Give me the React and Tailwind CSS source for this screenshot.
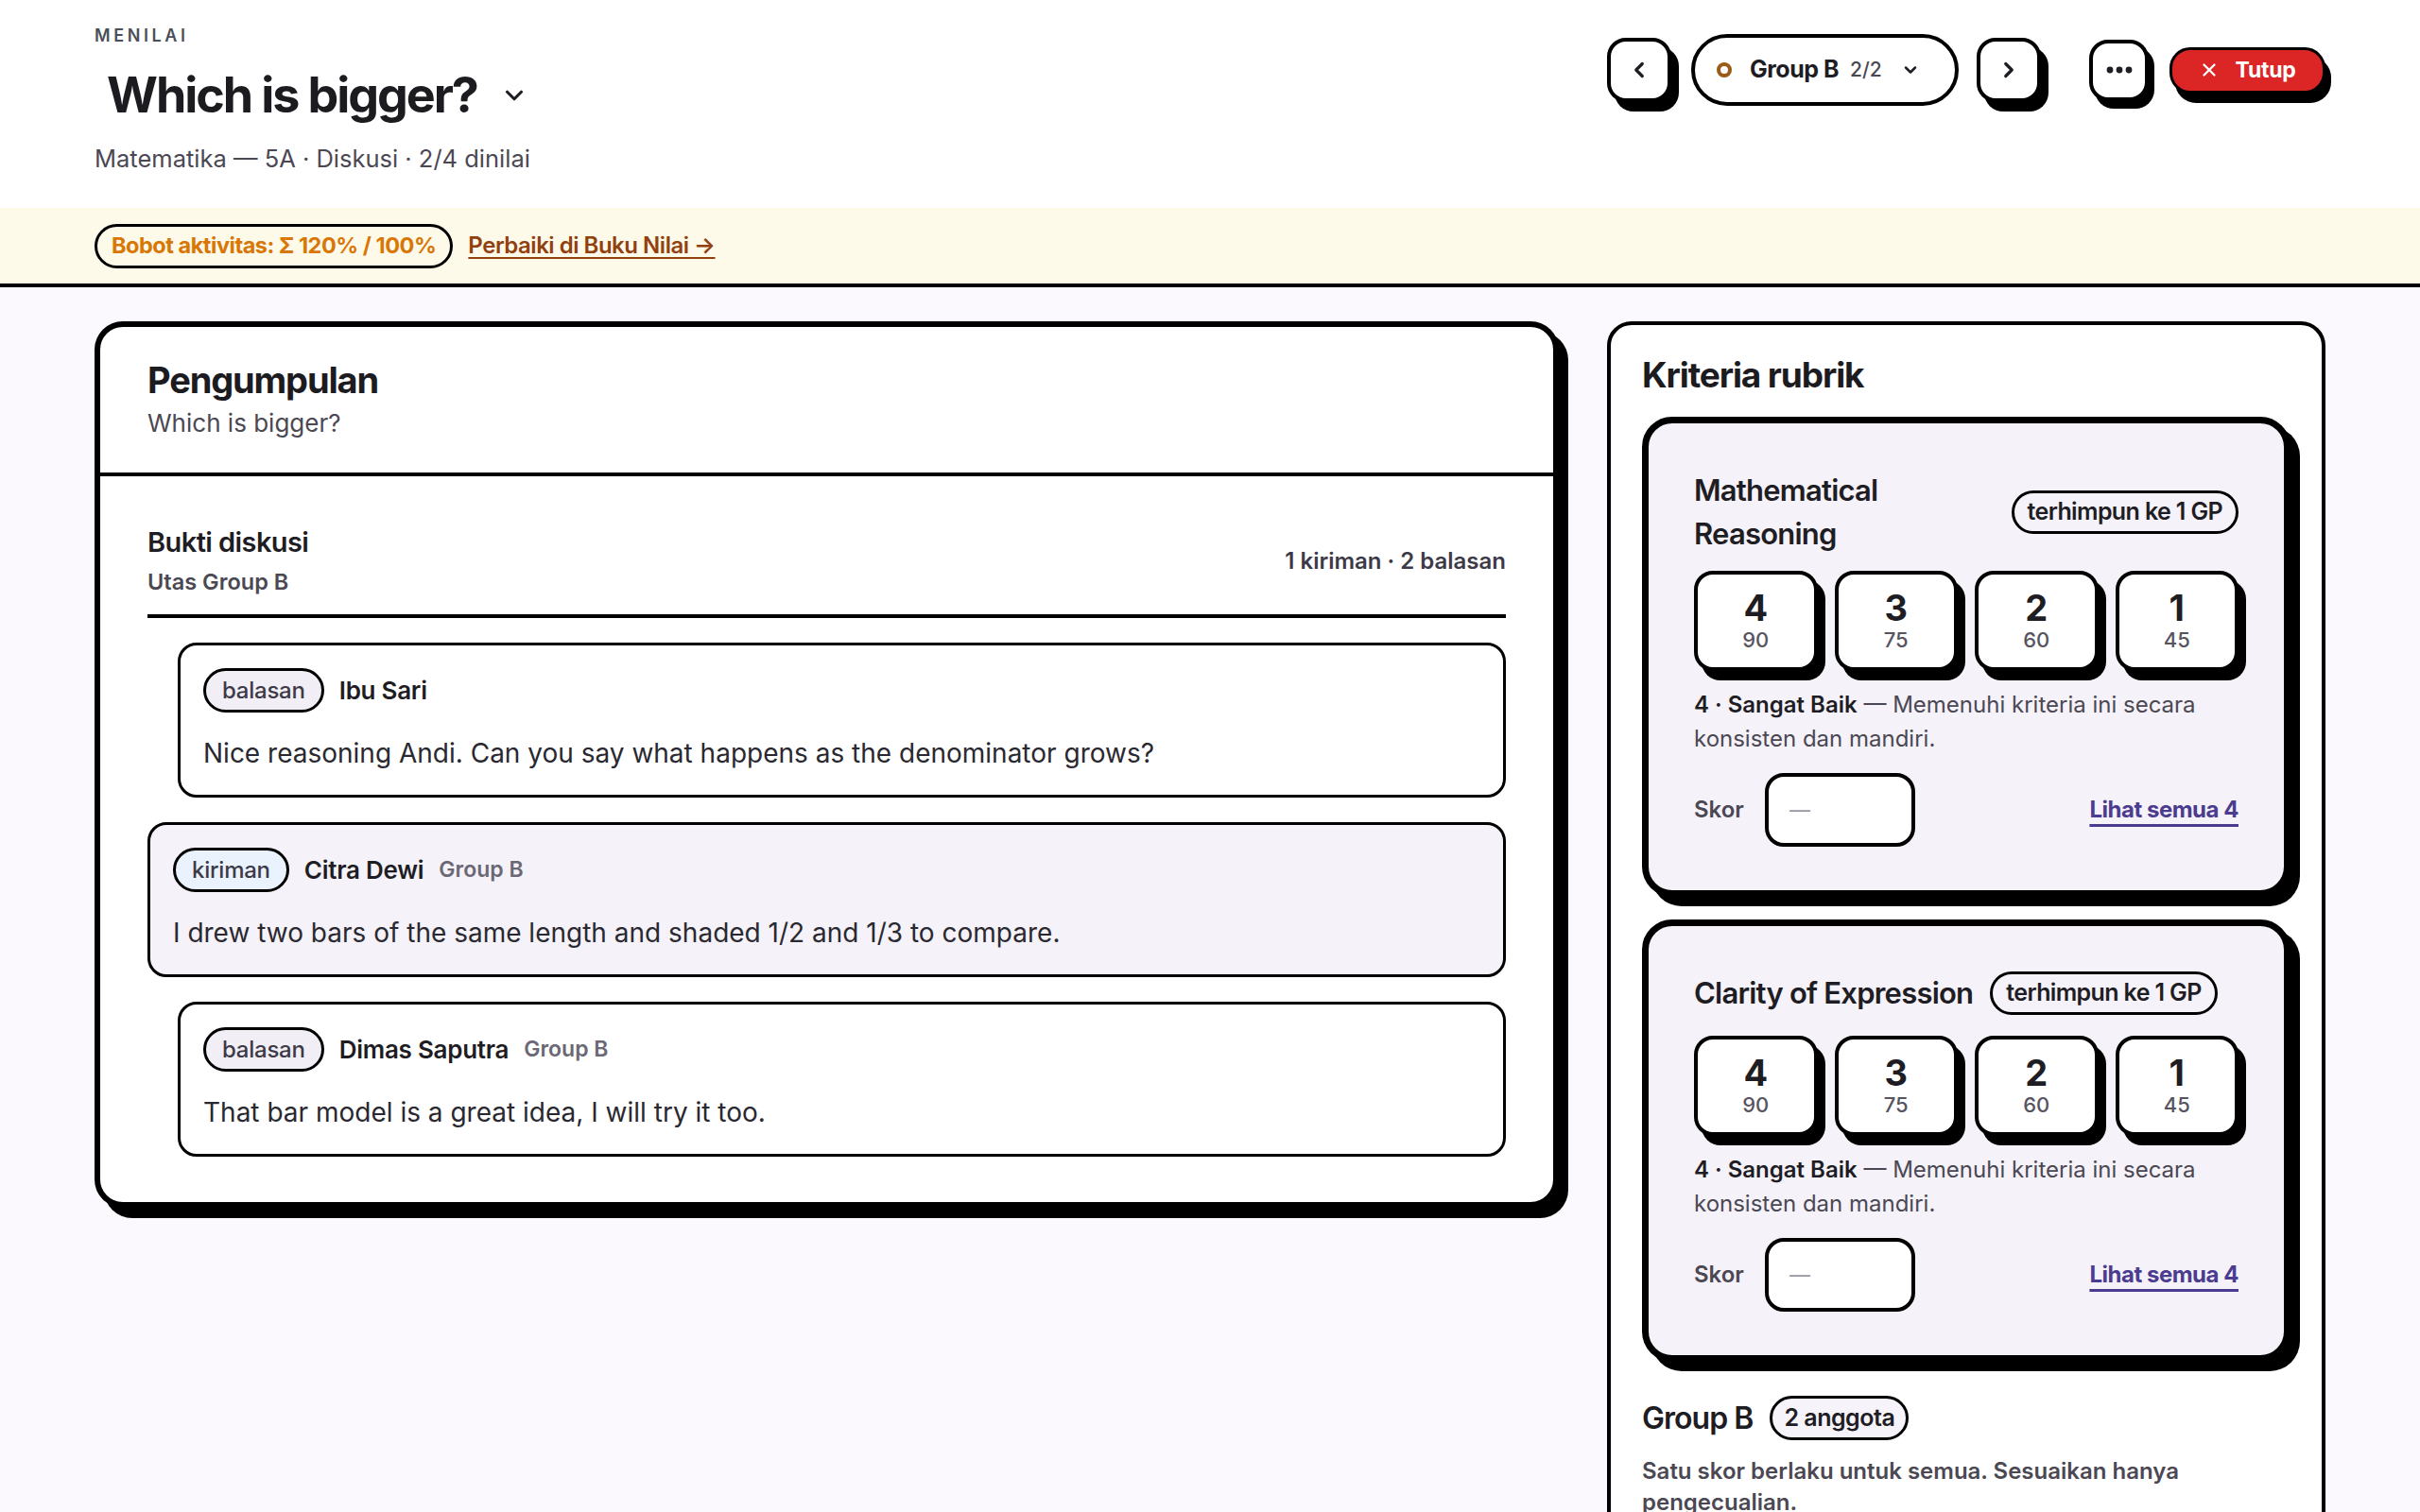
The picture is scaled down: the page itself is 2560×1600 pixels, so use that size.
import React from "react";
import { ChevronDown, ChevronLeft, ChevronRight, X } from "lucide-react";

const posts = [
  {
    kind: "balasan",
    name: "Ibu Sari",
    group: null,
    body: "Nice reasoning Andi. Can you say what happens as the denominator grows?",
    reply: true,
  },
  {
    kind: "kiriman",
    name: "Citra Dewi",
    group: "Group B",
    body: "I drew two bars of the same length and shaded 1/2 and 1/3 to compare.",
    reply: false,
  },
  {
    kind: "balasan",
    name: "Dimas Saputra",
    group: "Group B",
    body: "That bar model is a great idea, I will try it too.",
    reply: true,
  },
];

// wide titles wrap, short ones sit on one line next to the pill
const criteria = [
  { title: "Mathematical Reasoning", wraps: true },
  { title: "Clarity of Expression", wraps: false },
];

const levels = [
  [4, 90],
  [3, 75],
  [2, 60],
  [1, 45],
];

const Post = ({ post }) => (
  <div
    className={`${
      post.reply ? "ml-[32px] bg-white" : "bg-[#f5f3f9]"
    } rounded-[20px] border-[3px] border-black px-[24px] pt-[24px] pb-[25px]`}
  >
    <div className="flex items-center">
      <span
        className={`${
          post.kind === "kiriman" ? "bg-[#eaf2fd]" : "bg-[#f1eef5]"
        } h-[47px] px-[17px] rounded-full border-[3px] border-black flex items-center text-[24px] font-medium tracking-[-0.01em] text-[#3d3a48]`}
      >
        {post.kind}
      </span>
      <span className="ml-[16px] text-[26px] font-semibold tracking-[-0.01em] text-[#1f1d24]">{post.name}</span>
      {post.group && (
        <span className="ml-[16px] text-[23px] font-semibold text-[#6b6875]">{post.group}</span>
      )}
    </div>
    <p className="mt-[24px] text-[28px] leading-[38px] text-[#2a2830]">{post.body}</p>
  </div>
);

const Criterion = ({ title, wraps }) => (
  <div className="bg-[#f5f2fa] border-[7px] border-black rounded-[32px] shadow-[10px_10px_0_#000] px-[48px] pt-[48px] pb-[46px]">
    <div className="flex items-center gap-[18px]">
      <h3 className="text-[31px] leading-[46px] font-semibold tracking-[-0.025em] text-[#1f1d24]">
        {title}
      </h3>
      <span className="shrink-0 h-[46px] px-[14px] rounded-full border-[3px] border-black flex items-center text-[25px] font-semibold tracking-[-0.025em] text-[#1f1d24]">
        terhimpun ke 1 GP
      </span>
    </div>
    <div className={`${wraps ? "mt-[16px]" : "mt-[22px]"} grid grid-cols-4 gap-[18px]`}>
      {levels.map(([lvl, pts]) => (
        <button
          key={lvl}
          className="h-[106px] rounded-[20px] border-[4px] border-black bg-white shadow-[8px_10px_0_#000] flex flex-col items-center justify-center"
        >
          <span className="text-[38px] leading-[40px] font-bold text-[#1f1d24]">{lvl}</span>
          <span className="text-[22px] leading-[28px] font-medium text-[#57535f]">{pts}</span>
        </button>
      ))}
    </div>
    <p className="mt-[18px] text-[24px] leading-[36px] text-[#4b4853]">
      <span className="font-semibold text-[#1f1d24]">4 · Sangat Baik</span> — Memenuhi kriteria ini
      secara konsisten dan mandiri.
    </p>
    <div className="mt-[18px] flex items-center">
      <span className="text-[24px] font-semibold text-[#4b4853]">Skor</span>
      <div className="ml-[22px] w-[159px] h-[78px] rounded-[20px] border-[4px] border-black bg-white flex items-center px-[22px] text-[22px] text-[#9a97a3]">
        —
      </div>
      <a
        href="#"
        className="ml-auto text-[24px] font-bold tracking-[-0.02em] text-[#4b3c8f] underline decoration-[3px] underline-offset-[7px]"
      >
        Lihat semua 4
      </a>
    </div>
  </div>
);

export default function App() {
  return (
    <div className="min-h-screen bg-[#fbf8fe] font-['Inter',sans-serif] text-[#1f1d24]">
      {/* Header */}
      <header className="bg-white px-[100px] pt-[28px] pb-[36px] flex justify-between items-start">
        <div>
          <div className="text-[18px] leading-[20px] font-semibold tracking-[0.2em] text-[#4b4f58]">
            MENILAI
          </div>
          <button className="mt-[23px] ml-[13px] flex items-center gap-[24px]">
            <h1 className="text-[52px] leading-[60px] font-bold tracking-[-0.04em] text-[#1c1b1f]">
              Which is bigger?
            </h1>
            <ChevronDown size={30} strokeWidth={2.5} />
          </button>
          <div className="mt-[21px] text-[25.5px] leading-[32px] text-[#4b4853]">
            Matematika — 5A · Diskusi · 2/4 dinilai
          </div>
        </div>

        <div className="mt-[8px] h-[76px] flex items-center">
          <button className="w-[68px] h-[68px] rounded-[20px] border-[4px] border-black bg-white shadow-[8px_10px_0_#000] flex items-center justify-center">
            <ChevronLeft size={26} strokeWidth={3} />
          </button>
          <button className="ml-[21px] w-[283px] h-[76px] pl-[23px] rounded-full border-[4px] border-black bg-white flex items-center">
            <span className="w-[16px] h-[16px] rounded-full border-[4px] border-[#9a5b16]" />
            <span className="ml-[19px] text-[25px] font-bold tracking-[-0.02em] text-[#1f1d24]">Group B</span>
            <span className="ml-[12px] text-[21px] font-medium text-[#4b4853]">2/2</span>
            <ChevronDown className="ml-[20px]" size={20} strokeWidth={3} />
          </button>
          <button className="ml-[19px] w-[68px] h-[68px] rounded-[20px] border-[4px] border-black bg-white shadow-[8px_10px_0_#000] flex items-center justify-center">
            <ChevronRight size={26} strokeWidth={3} />
          </button>
          <button className="ml-[51px] w-[63px] h-[65px] rounded-[20px] border-[4px] border-black bg-white shadow-[6px_8px_0_#000] flex items-center justify-center">
            <svg width="28" height="8" viewBox="0 0 28 8" fill="#1f1d24">
              <circle cx="4" cy="4" r="3.4" />
              <circle cx="14" cy="4" r="3.4" />
              <circle cx="24" cy="4" r="3.4" />
            </svg>
          </button>
          <button className="ml-[22px] w-[165px] h-[49px] rounded-[22px] border-[3px] border-black bg-[#dc2626] shadow-[6px_10px_0_#000] flex items-center justify-center gap-[16px] text-white">
            <X size={22} strokeWidth={2.5} />
            <span className="text-[23px] font-bold tracking-[-0.01em]">Tutup</span>
          </button>
        </div>
      </header>

      {/* Warning banner */}
      <div className="bg-[#fdfaea] border-b-[4px] border-black px-[100px] h-[84px] flex items-center gap-[16px]">
        <span className="h-[47px] px-[15px] rounded-full border-[3px] border-black flex items-center text-[23.5px] font-bold tracking-[-0.02em] text-[#d97706]">
          Bobot aktivitas: Σ 120% / 100%
        </span>
        <a
          href="#"
          className="text-[24px] font-semibold tracking-[-0.02em] text-[#92400e] underline decoration-[2px] underline-offset-[4px]"
        >
          Perbaiki di Buku Nilai →
        </a>
      </div>

      {/* Main */}
      <main className="px-[100px] pt-[36px] pb-[60px] grid grid-cols-[1fr_760px] gap-[51px] items-start">
        <section className="bg-white border-[6px] border-black rounded-[30px] shadow-[10px_11px_0_#000]">
          <div className="px-[50px] pt-[34px] pb-[36px] border-b-[4px] border-black">
            <h2 className="text-[38px] leading-[44px] font-bold tracking-[-0.03em] text-[#1c1b1f]">
              Pengumpulan
            </h2>
            <p className="mt-[8px] text-[26px] leading-[32px] text-[#4b4853]">Which is bigger?</p>
          </div>
          <div className="px-[50px] pt-[52px] pb-[48px]">
            <div className="flex items-center justify-between pb-[19px] border-b-[4px] border-black">
              <div>
                <h3 className="text-[29px] leading-[36px] font-semibold tracking-[-0.02em]">Bukti diskusi</h3>
                <p className="mt-[9px] text-[23.5px] leading-[30px] font-semibold text-[#4b4853]">
                  Utas Group B
                </p>
              </div>
              <span className="text-[24px] font-semibold text-[#3d3a48]">1 kiriman · 2 balasan</span>
            </div>
            <div className="mt-[26px] flex flex-col gap-[26px]">
              {posts.map((p) => (
                <Post key={p.name} post={p} />
              ))}
            </div>
          </div>
        </section>

        <aside className="bg-white border-[4px] border-black rounded-[26px] px-[33px] pt-[32px] pb-[40px]">
          <h2 className="text-[37px] leading-[42px] font-bold tracking-[-0.03em] text-[#1c1b1f]">
            Kriteria rubrik
          </h2>
          <div className="mt-[23px] flex flex-col gap-[24px]">
            {criteria.map((c) => (
              <Criterion key={c.title} title={c.title} wraps={c.wraps} />
            ))}
          </div>
          <div className="mt-[36px] flex items-center gap-[18px]">
            <h3 className="text-[32px] leading-[40px] font-semibold tracking-[-0.03em]">Group B</h3>
            <span className="h-[47px] px-[12px] rounded-full border-[3px] border-black bg-[#f6f3fa] flex items-center text-[25px] font-semibold tracking-[-0.02em]">
              2 anggota
            </span>
          </div>
          <p className="mt-[16px] text-[24px] leading-[33px] font-semibold text-[#4b4853]">
            Satu skor berlaku untuk semua. Sesuaikan hanya pengecualian.
          </p>
        </aside>
      </main>
    </div>
  );
}
